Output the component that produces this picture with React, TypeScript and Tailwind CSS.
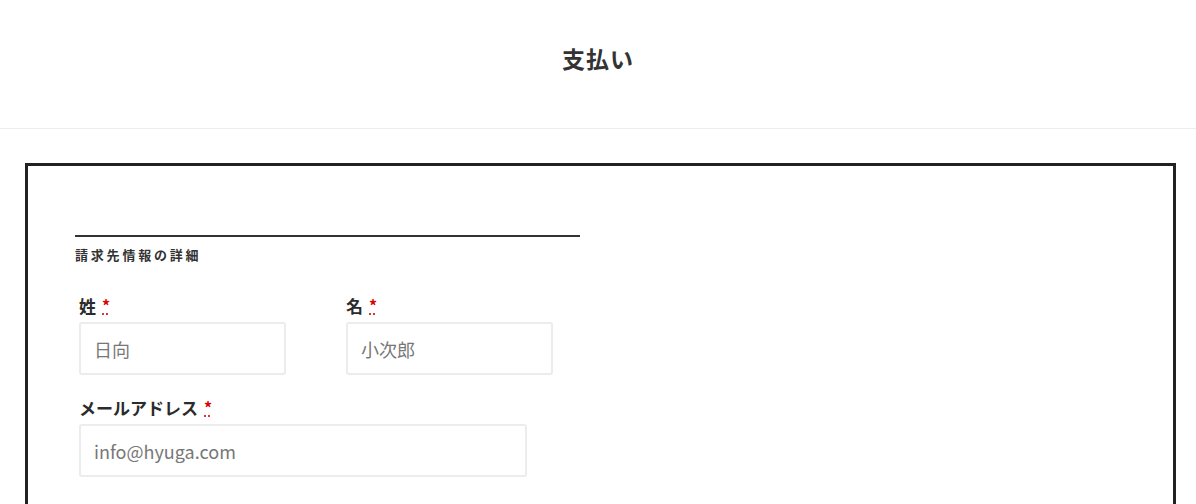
const font = { fontFamily: '"Noto Sans CJK JP", "Noto Sans", sans-serif' };

type FieldProps = {
  label: string;
  placeholder: string;
  width: string;
};

const Field = ({ label, placeholder, width }: FieldProps) => {
  return (
    <div className="flex flex-col">
      <label className="flex h-[26px] items-center text-[17px] font-bold leading-none text-[#2b2b2b]">
        {label}
        <abbr
          title="必須"
          className="ml-[6px] text-[16px] text-[#d00] decoration-dotted underline underline-offset-[2px]"
        >
          *
        </abbr>
      </label>
      <input
        readOnly
        placeholder={placeholder}
        className={`mt-[4px] h-[53px] ${width} rounded-[3px] border-2 border-[#ececec] bg-white px-[13px] text-[18px] text-[#333] outline-none placeholder:text-[#777]`}
      />
    </div>
  );
};

export default function App() {
  return (
    <div className="h-[504px] w-full overflow-hidden bg-white" style={font}>
      {/* header */}
      <div className="flex h-[129px] items-start justify-center border-b border-[#eeeeee] pt-[41px]">
        <h1 className="text-[23px] font-bold leading-[34px] tracking-[1px] text-[#333]">
          支払い
        </h1>
      </div>

      {/* checkout box */}
      <div className="ml-[25px] mr-[20px] mt-[34px] h-[400px] border-[3px] border-[#222] pl-[47px] pt-[69px]">
        <div className="w-[505px] border-t-2 border-[#333]" />
        <h3 className="mt-[9px] text-[13px] font-bold leading-[18px] tracking-[2.8px] text-[#333]">
          請求先情報の詳細
        </h3>

        <div className="ml-[4px] mt-[28px] flex flex-col gap-[19px]">
          <div className="flex gap-[60px]">
            <Field label="姓" placeholder="日向" width="w-[207px]" />
            <Field label="名" placeholder="小次郎" width="w-[207px]" />
          </div>
          <Field
            label="メールアドレス"
            placeholder="info@hyuga.com"
            width="w-[448px]"
          />
        </div>
      </div>
    </div>
  );
}
